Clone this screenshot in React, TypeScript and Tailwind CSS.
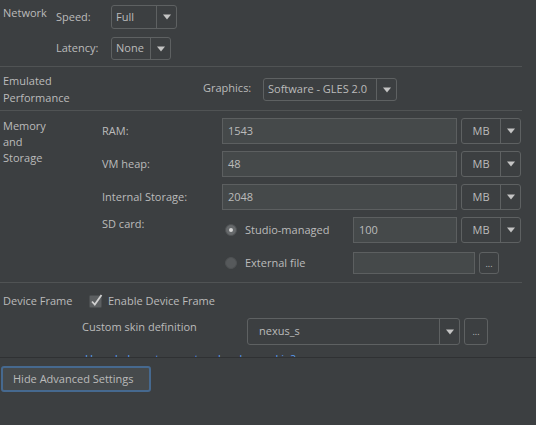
import React from "react";

const FONT = { fontFamily: '"Open Sans", "Noto Sans", sans-serif' };

function Arrow() {
  return (
    <svg width="8" height="6" viewBox="0 0 8 6">
      <polygon points="0,0.5 8,0.5 4,5.5" fill="#c4c4c4" />
    </svg>
  );
}

function Combo({
  value,
  className,
  center = false,
}: {
  value: string;
  className: string;
  center?: boolean;
}) {
  return (
    <div className={`flex rounded-[3px] border border-[#5e6162] bg-[#3c3f41] ${className}`}>
      <div className={`flex flex-1 items-center ${center ? "justify-center" : "pl-[4px]"}`}>{value}</div>
      <div className="flex w-[20px] items-center justify-center border-l border-[#5e6162]">
        <Arrow />
      </div>
    </div>
  );
}

function Field({ value = "", className }: { value?: string; className: string }) {
  return (
    <div className={`flex items-center border border-[#5c5f60] bg-[#45494a] pl-[5px] ${className}`}>{value}</div>
  );
}

function DotsButton({ className }: { className: string }) {
  return (
    <div
      className={`flex items-center justify-center rounded-[3px] border border-[#5e6162] text-[9px] leading-none ${className}`}
    >
      ...
    </div>
  );
}

function Radio({ checked }: { checked: boolean }) {
  return (
    <div
      className={`flex h-[12px] w-[12px] items-center justify-center rounded-full border border-[#4e5153] ${
        checked ? "bg-[#66696b]" : "bg-[#56595b]"
      }`}
    >
      {checked ? <div className="h-[4px] w-[4px] rounded-full bg-[#d6d6d6]" /> : null}
    </div>
  );
}

function MemRow({ label, value }: { label: string; value: string }) {
  return (
    <div className="flex h-[26px] items-center">
      <span className="w-[120px]">{label}</span>
      <Field value={value} className="h-[26px] w-[235px]" />
      <Combo value="MB" center className="ml-[4px] h-[26px] w-[60px]" />
    </div>
  );
}

export default function App() {
  return (
    <div
      className="flex h-[425px] w-[536px] flex-col overflow-hidden bg-[#3c3f41] text-[11px] text-[#bbbbbb]"
      style={FONT}
    >
      <div className="h-[358px] shrink-0 overflow-hidden border-b border-[#2f3133]">
        {/* Network */}
        <section className="box-border flex h-[67px] w-[522px] border-b border-[#505354] pl-[3px] pt-[5px]">
          <span className="w-[53px] leading-[16px]">Network</span>
          <div className="flex flex-col gap-[8px]">
            <div className="flex h-[24px] items-center">
              <span className="w-[55px]">Speed:</span>
              <Combo value="Full" className="h-[24px] w-[66px]" />
            </div>
            <div className="flex h-[23px] items-center">
              <span className="w-[55px]">Latency:</span>
              <Combo value="None" className="h-[23px] w-[60px]" />
            </div>
          </div>
        </section>

        {/* Emulated Performance */}
        <section className="box-border flex h-[44px] w-[522px] items-center border-b border-[#505354] pl-[3px]">
          <span className="w-[200px] leading-[17px]">
            Emulated
            <br />
            Performance
          </span>
          <span className="w-[60px]">Graphics:</span>
          <Combo value="Software - GLES 2.0" className="mt-[2px] h-[23px] w-[134px]" />
        </section>

        {/* Memory and Storage */}
        <section className="box-border flex h-[172px] w-[522px] border-b border-[#505354] pl-[3px] pt-[7px]">
          <span className="w-[99px] leading-[16px]">
            Memory
            <br />
            and
            <br />
            Storage
          </span>
          <div className="flex flex-col gap-[7px]">
            <MemRow label="RAM:" value="1543" />
            <MemRow label="VM heap:" value="48" />
            <MemRow label="Internal Storage:" value="2048" />
            <div className="flex">
              <span className="-mt-[1px] w-[120px] leading-[16px]">SD card:</span>
              <div className="flex flex-col gap-[9px]">
                <div className="flex h-[26px] items-center">
                  <div className="flex w-[131px] items-center pl-[3px]">
                    <Radio checked />
                    <span className="ml-[8px]">Studio-managed</span>
                  </div>
                  <Field value="100" className="h-[26px] w-[104px]" />
                  <Combo value="MB" center className="ml-[4px] h-[26px] w-[60px]" />
                </div>
                <div className="flex h-[22px] items-center">
                  <div className="flex w-[131px] items-center pl-[3px]">
                    <Radio checked={false} />
                    <span className="ml-[8px]">External file</span>
                  </div>
                  <Field className="h-[22px] w-[122px]" />
                  <DotsButton className="ml-[4px] h-[22px] w-[20px]" />
                </div>
              </div>
            </div>
          </div>
        </section>

        {/* Device Frame */}
        <section className="w-[522px] pl-[3px] pt-[9px]">
          <div className="flex h-[18px] items-center">
            <span className="w-[86px]">Device Frame</span>
            <svg width="14" height="14" viewBox="0 0 14 14">
              <rect x="0.5" y="1.5" width="12" height="12" rx="1" fill="#5c5f61" stroke="#4b4e50" />
              <path d="M3 7.5 L5.8 10.5 L12.5 1" fill="none" stroke="#d0d0d0" strokeWidth="1.8" />
            </svg>
            <span className="ml-[5px]">Enable Device Frame</span>
          </div>
          <div className="mt-[8px] flex pl-[79px]">
            <span className="mt-[1px] w-[165px] leading-[16px]">Custom skin definition</span>
            <div className="flex h-[27px] w-[213px] rounded-[3px] border border-[#5e6162]">
              <div className="flex flex-1 items-center pl-[11px]">nexus_s</div>
              <div className="flex w-[20px] items-center justify-center border-l border-[#5e6162]">
                <Arrow />
              </div>
            </div>
            <DotsButton className="ml-[4px] h-[27px] w-[24px]" />
          </div>
          <div className="mt-[7px] pl-[82px] leading-[14px] text-[#589df6]">
            How do I create a custom hardware skin?
          </div>
        </section>
      </div>

      <div className="pl-[1px] pt-[8px]">
        <button className="flex h-[26px] w-[150px] items-center rounded-[3px] border-2 border-[#46698f] bg-[#464a4c] pl-[10px] text-[#bbbbbb]">
          Hide Advanced Settings
        </button>
      </div>
    </div>
  );
}
